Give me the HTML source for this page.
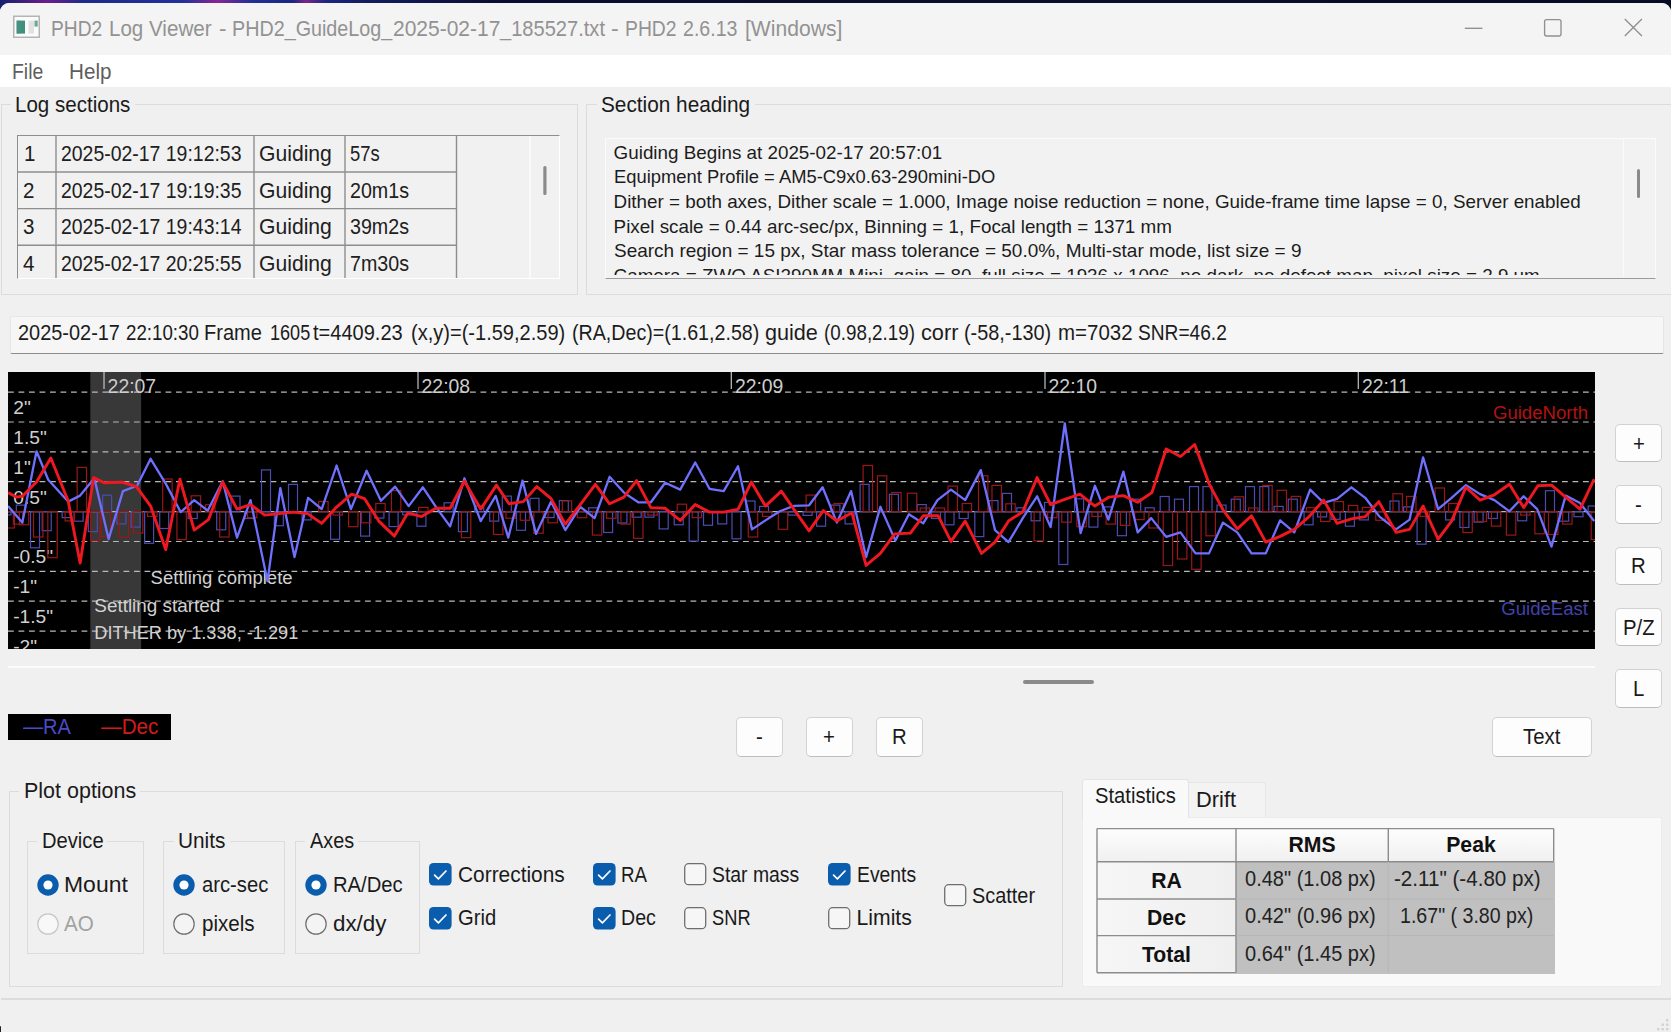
<!DOCTYPE html>
<html lang="en"><head><meta charset="utf-8"><title>PHD2 Log Viewer</title><style>
html,body{margin:0;padding:0}
body{width:1671px;height:1032px;overflow:hidden;background:#0b0b2a;font-family:"Liberation Sans",sans-serif;position:relative}
#wall{position:absolute;left:0;top:0;width:1671px;height:1032px;background:linear-gradient(90deg,#16206e 0,#6a1f8a 2.8%,#1c2a8c 5%,#23309a 11%,#8a2690 13%,#22309a 15%,#1b2680 17.5%,#7a2488 18.3%,#1b2680 19.5%,#141c60 22%,#0b0d30 30%,#090a24 100%)}
#winbg{position:absolute;left:0;top:2.6px;width:1671px;height:1040px;background:#f0f0f0;border-radius:9px 9px 0 0}
#win{position:absolute;left:0;top:0;width:1671px;height:1032px;overflow:hidden}
#win>*,.clip>*{position:absolute}
#win{margin-top:0}
#titlebar{left:0;top:2.6px;width:1671px;height:52.7px;background:#f4f4f4;border-radius:9px 9px 0 0}
#menubar{left:0;top:55.3px;width:1671px;height:31.7px;background:#fff}
.t{white-space:pre;transform-origin:0 50%;display:block}
.clip{overflow:hidden}
svg.a{overflow:visible}
#graph{overflow:hidden}
</style></head><body>
<div id="wall"></div>
<div id="winbg"></div>
<div id="win">
<div id="titlebar"></div>
<div id="menubar"></div>
<svg class="a" style="left:13px;top:15px" width="28" height="24" viewBox="0 0 28 24">
<rect x="0.75" y="1.25" width="25.5" height="21" fill="#fbfbfb" stroke="#b4b4b4" stroke-width="1.5"/>
<rect x="3.6" y="5.6" width="8.4" height="13" fill="#3f9078"/>
<rect x="3.6" y="5.6" width="4" height="13" fill="#4a8f8f" opacity=".6"/>
<rect x="15.5" y="5.6" width="5.5" height="13" fill="#e2e2e2"/>
<rect x="21.5" y="5.6" width="3.2" height="6" fill="#6aa795"/>
</svg>
<span class="t" style="left:50.77px;top:16.60px;font-size:21.2px;line-height:23px;color:#929292;transform:scaleX(0.9048);">PHD2</span>
<span class="t" style="left:108.92px;top:16.60px;font-size:21.2px;line-height:23px;color:#929292;transform:scaleX(0.9684);">Log</span>
<span class="t" style="left:149.32px;top:16.60px;font-size:21.2px;line-height:23px;color:#929292;transform:scaleX(0.9727);">Viewer</span>
<span class="t" style="left:218.76px;top:16.60px;font-size:21.2px;line-height:23px;color:#929292;transform:scaleX(1.0600);">-</span>
<span class="t" style="left:231.95px;top:16.60px;font-size:21.2px;line-height:23px;color:#929292;transform:scaleX(0.9316);">PHD2_GuideLog_</span>
<span class="t" style="left:392.51px;top:16.60px;font-size:21.2px;line-height:23px;color:#929292;transform:scaleX(0.9902);">2025-02-17</span>
<span class="t" style="left:499.64px;top:16.60px;font-size:21.2px;line-height:23px;color:#929292;transform:scaleX(0.9479);">_185527.txt</span>
<span class="t" style="left:611.43px;top:16.60px;font-size:21.2px;line-height:23px;color:#929292;transform:scaleX(1.0953);">-</span>
<span class="t" style="left:625.06px;top:16.60px;font-size:21.2px;line-height:23px;color:#929292;transform:scaleX(0.9120);">PHD2</span>
<span class="t" style="left:683.15px;top:16.60px;font-size:21.2px;line-height:23px;color:#929292;transform:scaleX(0.9245);">2.6.13</span>
<span class="t" style="left:744.90px;top:16.60px;font-size:21.2px;line-height:23px;color:#929292;transform:scaleX(0.9960);">[Windows]</span>
<svg class="a" style="left:1455px;top:10px" width="200" height="36" viewBox="0 0 200 36" fill="none" stroke="#909090" stroke-width="1.35">
<path d="M9.8 18.3H27.4"/>
<rect x="89.6" y="9.6" width="16.4" height="16.4" rx="2"/>
<path d="M169.8 9 L186.9 26.1 M186.9 9 L169.8 26.1"/>
</svg>
<span class="t" style="left:11.96px;top:60.40px;font-size:21.2px;line-height:23px;color:#5e5e5e;transform:scaleX(0.9157);">File</span>
<span class="t" style="left:68.52px;top:60.40px;font-size:21.2px;line-height:23px;color:#5e5e5e;transform:scaleX(0.9739);">Help</span>
<div style="left:1.00px;top:103.50px;width:577.00px;height:191.50px;border:1px solid #dcdcdc;box-sizing:border-box;"></div>
<div style="left:11.00px;top:101.50px;width:124.00px;height:5.00px;background:#f0f0f0;"></div>
<span class="t" style="left:15.02px;top:92.50px;font-size:21.2px;line-height:23px;color:#1a1a1a;transform:scaleX(0.9700);">Log sections</span>
<div style="left:17.00px;top:135.00px;width:543.00px;height:144.00px;box-sizing:border-box;border-top:1.5px solid #8e8e8e;border-left:1.5px solid #8e8e8e;border-right:1.5px solid #fff;border-bottom:1.5px solid #fff;background:#f1f1f1;"></div>
<svg class="a" style="left:17px;top:135px" width="543" height="143" viewBox="0 0 543 143" stroke="#8e8e8e" stroke-width="1.4" fill="none">
<path d="M0 37.0H439.5"/>
<path d="M0 73.6H439.5"/>
<path d="M0 110.2H439.5"/>
<path d="M39.0 0V143"/>
<path d="M237.0 0V143"/>
<path d="M328.0 0V143"/>
<path d="M439.5 0V143"/>
<path d="M513 1V143" stroke="#fbfbfb" stroke-width="1.5"/>
<rect x="526.3" y="31" width="3.2" height="29" rx="1.5" fill="#8a8a8a" stroke="none"/>
</svg>
<div class="clip" style="left:17px;top:135px;width:541px;height:142.5px">
<span class="t" style="left:6.82px;top:7.00px;font-size:21.2px;line-height:23px;color:#202020;transform:scaleX(0.9700);">1</span>
<span class="t" style="left:43.56px;top:7.00px;font-size:21.2px;line-height:23px;color:#202020;transform:scaleX(0.9173);">2025-02-17 19:12:53</span>
<span class="t" style="left:242.30px;top:7.00px;font-size:21.2px;line-height:23px;color:#202020;transform:scaleX(0.9976);">Guiding</span>
<span class="t" style="left:333.39px;top:7.00px;font-size:21.2px;line-height:23px;color:#202020;transform:scaleX(0.8694);">57s</span>
<span class="t" style="left:5.92px;top:43.60px;font-size:21.2px;line-height:23px;color:#202020;transform:scaleX(0.9700);">2</span>
<span class="t" style="left:43.56px;top:43.60px;font-size:21.2px;line-height:23px;color:#202020;transform:scaleX(0.9173);">2025-02-17 19:19:35</span>
<span class="t" style="left:242.30px;top:43.60px;font-size:21.2px;line-height:23px;color:#202020;transform:scaleX(0.9976);">Guiding</span>
<span class="t" style="left:333.35px;top:43.60px;font-size:21.2px;line-height:23px;color:#202020;transform:scaleX(0.9280);">20m1s</span>
<span class="t" style="left:5.92px;top:80.20px;font-size:21.2px;line-height:23px;color:#202020;transform:scaleX(0.9700);">3</span>
<span class="t" style="left:43.56px;top:80.20px;font-size:21.2px;line-height:23px;color:#202020;transform:scaleX(0.9173);">2025-02-17 19:43:14</span>
<span class="t" style="left:242.30px;top:80.20px;font-size:21.2px;line-height:23px;color:#202020;transform:scaleX(0.9976);">Guiding</span>
<span class="t" style="left:333.35px;top:80.20px;font-size:21.2px;line-height:23px;color:#202020;transform:scaleX(0.9280);">39m2s</span>
<span class="t" style="left:5.92px;top:116.80px;font-size:21.2px;line-height:23px;color:#202020;transform:scaleX(0.9700);">4</span>
<span class="t" style="left:43.56px;top:116.80px;font-size:21.2px;line-height:23px;color:#202020;transform:scaleX(0.9173);">2025-02-17 20:25:55</span>
<span class="t" style="left:242.30px;top:116.80px;font-size:21.2px;line-height:23px;color:#202020;transform:scaleX(0.9976);">Guiding</span>
<span class="t" style="left:333.35px;top:116.80px;font-size:21.2px;line-height:23px;color:#202020;transform:scaleX(0.9280);">7m30s</span>
</div>
<div style="left:586.00px;top:103.50px;width:1094.00px;height:191.50px;border:1px solid #dcdcdc;box-sizing:border-box;"></div>
<div style="left:597.00px;top:101.50px;width:158.00px;height:5.00px;background:#f0f0f0;"></div>
<span class="t" style="left:601.01px;top:92.50px;font-size:21.2px;line-height:23px;color:#1a1a1a;transform:scaleX(0.9810);">Section heading</span>
<div style="left:605.00px;top:137.50px;width:1050.50px;height:141.00px;box-sizing:border-box;background:#f2f2f2;border:1.5px solid #fbfbfb;border-bottom:1.5px solid #9a9a9a;"></div>
<div style="left:1622.50px;top:139.00px;width:1.50px;height:138.00px;background:#fafafa;"></div>
<div style="left:1637.30px;top:169.00px;width:3.20px;height:28.50px;background:#8a8a8a;border-radius:1.5px;"></div>
<div class="clip" style="left:606px;top:139px;width:1016px;height:136px">
<span class="t" style="left:7.60px;top:2.90px;font-size:18.84px;line-height:21px;color:#1c1c1c;">Guiding Begins at 2025-02-17 20:57:01</span>
<span class="t" style="left:7.62px;top:27.45px;font-size:18.84px;line-height:21px;color:#1c1c1c;transform:scaleX(0.9756);">Equipment Profile = AM5-C9x0.63-290mini-DO</span>
<span class="t" style="left:7.60px;top:52.00px;font-size:18.84px;line-height:21px;color:#1c1c1c;">Dither = both axes, Dither scale = 1.000, Image noise reduction = none, Guide-frame time lapse = 0, Server enabled</span>
<span class="t" style="left:7.60px;top:76.55px;font-size:18.84px;line-height:21px;color:#1c1c1c;">Pixel scale = 0.44 arc-sec/px, Binning = 1, Focal length = 1371 mm</span>
<span class="t" style="left:7.59px;top:101.10px;font-size:18.84px;line-height:21px;color:#1c1c1c;transform:scaleX(1.0083);">Search region = 15 px, Star mass tolerance = 50.0%, Multi-star mode, list size = 9</span>
<span class="t" style="left:7.60px;top:125.65px;font-size:18.84px;line-height:21px;color:#1c1c1c;">Camera = ZWO ASI290MM Mini, gain = 80, full size = 1936 x 1096, no dark, no defect map, pixel size = 2.9 um</span>
</div>
<div style="left:10.00px;top:316.00px;width:1653.50px;height:37.50px;box-sizing:border-box;background:#f6f6f6;border:1px solid #e6e6e6;border-bottom:1.5px solid #8c8c8c;border-radius:2px;"></div>
<span class="t" style="left:18.14px;top:321.00px;font-size:21.2px;line-height:23px;color:#1c1c1c;transform:scaleX(0.9407);">2025-02-17</span>
<span class="t" style="left:125.68px;top:321.00px;font-size:21.2px;line-height:23px;color:#1c1c1c;transform:scaleX(0.8838);">22:10:30</span>
<span class="t" style="left:203.94px;top:321.00px;font-size:21.2px;line-height:23px;color:#1c1c1c;transform:scaleX(0.9456);">Frame</span>
<span class="t" style="left:269.60px;top:321.00px;font-size:21.2px;line-height:23px;color:#1c1c1c;transform:scaleX(0.8522);">1605</span>
<span class="t" style="left:313.14px;top:321.00px;font-size:21.2px;line-height:23px;color:#1c1c1c;transform:scaleX(0.9454);">t=4409.23</span>
<span class="t" style="left:411.34px;top:321.00px;font-size:21.2px;line-height:23px;color:#1c1c1c;transform:scaleX(0.9457);">(x,y)=(-1.59,2.59)</span>
<span class="t" style="left:571.95px;top:321.00px;font-size:21.2px;line-height:23px;color:#1c1c1c;transform:scaleX(0.9274);">(RA,Dec)=(1.61,2.58)</span>
<span class="t" style="left:765.09px;top:321.00px;font-size:21.2px;line-height:23px;color:#1c1c1c;transform:scaleX(1.0203);">guide</span>
<span class="t" style="left:824.18px;top:321.00px;font-size:21.2px;line-height:23px;color:#1c1c1c;transform:scaleX(0.8879);">(0.98,2.19)</span>
<span class="t" style="left:921.28px;top:321.00px;font-size:21.2px;line-height:23px;color:#1c1c1c;transform:scaleX(1.0253);">corr</span>
<span class="t" style="left:964.14px;top:321.00px;font-size:21.2px;line-height:23px;color:#1c1c1c;transform:scaleX(0.9369);">(-58,-130)</span>
<span class="t" style="left:1057.52px;top:321.00px;font-size:21.2px;line-height:23px;color:#1c1c1c;transform:scaleX(0.9670);">m=7032</span>
<span class="t" style="left:1138.37px;top:321.00px;font-size:21.2px;line-height:23px;color:#1c1c1c;transform:scaleX(0.9031);">SNR=46.2</span>
<svg class="a" id="graph" style="left:8px;top:371.5px" width="1587" height="277.1" viewBox="8 371.5 1587 277.1" font-family="Liberation Sans, sans-serif">
<rect x="8" y="371.5" width="1587" height="277.1" fill="#000"/>
<rect x="90.3" y="371.5" width="50.8" height="277.1" fill="#383838"/>
<path d="M8 391.6H1595" stroke="#b8b8b8" stroke-width="1.15" stroke-dasharray="5.8 4.7"/>
<path d="M8 421.5H1595" stroke="#b8b8b8" stroke-width="1.15" stroke-dasharray="5.8 4.7"/>
<path d="M8 451.4H1595" stroke="#b8b8b8" stroke-width="1.15" stroke-dasharray="5.8 4.7"/>
<path d="M8 481.2H1595" stroke="#b8b8b8" stroke-width="1.15" stroke-dasharray="5.8 4.7"/>
<path d="M8 511.1H1595" stroke="#bcbcbc" stroke-width="1.4"/>
<path d="M8 541.0H1595" stroke="#b8b8b8" stroke-width="1.15" stroke-dasharray="5.8 4.7"/>
<path d="M8 570.9H1595" stroke="#b8b8b8" stroke-width="1.15" stroke-dasharray="5.8 4.7"/>
<path d="M8 600.7H1595" stroke="#b8b8b8" stroke-width="1.15" stroke-dasharray="5.8 4.7"/>
<path d="M8 630.6H1595" stroke="#b8b8b8" stroke-width="1.15" stroke-dasharray="5.8 4.7"/>
<path d="M104 371.5V388.5" stroke="#c4c4c4" stroke-width="1.2"/>
<text x="107.6" y="392.4" font-size="19.4" fill="#cecece">22:07</text>
<path d="M418 371.5V388.5" stroke="#c4c4c4" stroke-width="1.2"/>
<text x="421.6" y="392.4" font-size="19.4" fill="#cecece">22:08</text>
<path d="M731.3 371.5V388.5" stroke="#c4c4c4" stroke-width="1.2"/>
<text x="734.9" y="392.4" font-size="19.4" fill="#cecece">22:09</text>
<path d="M1045 371.5V388.5" stroke="#c4c4c4" stroke-width="1.2"/>
<text x="1048.6" y="392.4" font-size="19.4" fill="#cecece">22:10</text>
<path d="M1358.3 371.5V388.5" stroke="#c4c4c4" stroke-width="1.2"/>
<text x="1361.9" y="392.4" font-size="19.4" fill="#cecece">22:11</text>
<text x="13.2" y="413.5" font-size="19.2" fill="#d0d0d0">2"</text>
<text x="13.2" y="443.4" font-size="19.2" fill="#d0d0d0">1.5"</text>
<text x="13.2" y="473.2" font-size="19.2" fill="#d0d0d0">1"</text>
<text x="13.2" y="503.1" font-size="19.2" fill="#d0d0d0">0.5"</text>
<text x="13.2" y="562.9" font-size="19.2" fill="#d0d0d0">-0.5"</text>
<text x="13.2" y="592.8" font-size="19.2" fill="#d0d0d0">-1"</text>
<text x="13.2" y="622.6" font-size="19.2" fill="#d0d0d0">-1.5"</text>
<text x="13.2" y="652.5" font-size="19.2" fill="#d0d0d0">-2"</text>
<text x="150.6" y="583.1" font-size="18.7" fill="#d2d2d2" textLength="142" lengthAdjust="spacingAndGlyphs">Settling complete</text>
<text x="94.3" y="611.1" font-size="18.7" fill="#d2d2d2" textLength="126" lengthAdjust="spacingAndGlyphs">Settling started</text>
<text x="94.3" y="639" font-size="18.7" fill="#d2d2d2" textLength="204" lengthAdjust="spacingAndGlyphs">DITHER by 1.338, -1.291</text>
<text x="1588" y="418.6" font-size="18.6" fill="#b41212" text-anchor="end">GuideNorth</text>
<text x="1588" y="614.8" font-size="18.6" fill="#4242aa" text-anchor="end">GuideEast</text>
<g fill="none" stroke-width="1.2">
<rect x="2.0" y="511.1" width="9" height="3.3" stroke="#4c4cb0"/>
<rect x="16.3" y="504.6" width="9" height="6.6" stroke="#4c4cb0"/>
<rect x="30.5" y="511.1" width="9" height="36.2" stroke="#4c4cb0"/>
<rect x="42.2" y="511.1" width="9" height="19.1" stroke="#4c4cb0"/>
<rect x="62.1" y="511.1" width="9" height="6.0" stroke="#4c4cb0"/>
<rect x="74.1" y="511.1" width="9" height="9.6" stroke="#4c4cb0"/>
<rect x="88.3" y="511.1" width="9" height="20.0" stroke="#4c4cb0"/>
<rect x="102.6" y="494.7" width="9" height="16.5" stroke="#4c4cb0"/>
<rect x="116.9" y="511.1" width="9" height="12.3" stroke="#4c4cb0"/>
<rect x="131.1" y="511.1" width="9" height="15.5" stroke="#4c4cb0"/>
<rect x="144.6" y="511.1" width="9" height="31.7" stroke="#4c4cb0"/>
<rect x="159.7" y="511.1" width="9" height="16.9" stroke="#4c4cb0"/>
<rect x="188.2" y="511.1" width="9" height="6.9" stroke="#4c4cb0"/>
<rect x="216.7" y="511.1" width="9" height="18.2" stroke="#4c4cb0"/>
<rect x="231.0" y="495.6" width="9" height="15.6" stroke="#4c4cb0"/>
<rect x="244.5" y="511.1" width="9" height="6.9" stroke="#4c4cb0"/>
<rect x="261.5" y="469.4" width="9" height="41.7" stroke="#4c4cb0"/>
<rect x="274.3" y="511.1" width="9" height="14.1" stroke="#4c4cb0"/>
<rect x="288.5" y="483.9" width="9" height="27.3" stroke="#4c4cb0"/>
<rect x="302.1" y="511.1" width="9" height="8.3" stroke="#4c4cb0"/>
<rect x="330.6" y="511.1" width="9" height="27.7" stroke="#4c4cb0"/>
<rect x="360.6" y="511.1" width="9" height="24.5" stroke="#4c4cb0"/>
<rect x="374.9" y="511.1" width="9" height="6.5" stroke="#4c4cb0"/>
<rect x="389.1" y="511.1" width="9" height="15.0" stroke="#4c4cb0"/>
<rect x="402.7" y="511.1" width="9" height="3.3" stroke="#4c4cb0"/>
<rect x="416.9" y="511.1" width="9" height="14.6" stroke="#4c4cb0"/>
<rect x="444.1" y="502.3" width="9" height="8.8" stroke="#4c4cb0"/>
<rect x="458.4" y="511.1" width="9" height="20.0" stroke="#4c4cb0"/>
<rect x="474.7" y="505.5" width="9" height="5.7" stroke="#4c4cb0"/>
<rect x="489.7" y="511.1" width="9" height="9.5" stroke="#4c4cb0"/>
<rect x="502.3" y="495.6" width="9" height="15.6" stroke="#4c4cb0"/>
<rect x="516.5" y="511.1" width="9" height="18.7" stroke="#4c4cb0"/>
<rect x="530.0" y="497.8" width="9" height="13.3" stroke="#4c4cb0"/>
<rect x="545.1" y="511.1" width="9" height="6.0" stroke="#4c4cb0"/>
<rect x="559.3" y="500.1" width="9" height="11.1" stroke="#4c4cb0"/>
<rect x="588.6" y="507.3" width="9" height="3.9" stroke="#4c4cb0"/>
<rect x="603.6" y="511.1" width="9" height="20.9" stroke="#4c4cb0"/>
<rect x="617.9" y="511.1" width="9" height="11.4" stroke="#4c4cb0"/>
<rect x="632.2" y="511.1" width="9" height="5.6" stroke="#4c4cb0"/>
<rect x="644.9" y="511.1" width="9" height="5.6" stroke="#4c4cb0"/>
<rect x="659.2" y="511.1" width="9" height="17.3" stroke="#4c4cb0"/>
<rect x="674.2" y="511.1" width="9" height="13.2" stroke="#4c4cb0"/>
<rect x="689.2" y="511.1" width="9" height="29.5" stroke="#4c4cb0"/>
<rect x="703.5" y="511.1" width="9" height="13.7" stroke="#4c4cb0"/>
<rect x="717.7" y="511.1" width="9" height="12.3" stroke="#4c4cb0"/>
<rect x="732.0" y="511.1" width="9" height="27.2" stroke="#4c4cb0"/>
<rect x="746.0" y="500.5" width="9" height="10.6" stroke="#4c4cb0"/>
<rect x="759.5" y="505.9" width="9" height="5.2" stroke="#4c4cb0"/>
<rect x="788.1" y="511.1" width="9" height="3.5" stroke="#4c4cb0"/>
<rect x="803.1" y="511.1" width="9" height="3.8" stroke="#4c4cb0"/>
<rect x="816.6" y="511.1" width="9" height="14.6" stroke="#4c4cb0"/>
<rect x="830.9" y="504.6" width="9" height="6.6" stroke="#4c4cb0"/>
<rect x="845.1" y="511.1" width="9" height="12.3" stroke="#4c4cb0"/>
<rect x="860.1" y="483.9" width="9" height="27.3" stroke="#4c4cb0"/>
<rect x="889.4" y="493.8" width="9" height="17.4" stroke="#4c4cb0"/>
<rect x="917.2" y="504.1" width="9" height="7.0" stroke="#4c4cb0"/>
<rect x="931.5" y="511.1" width="9" height="6.9" stroke="#4c4cb0"/>
<rect x="945.0" y="511.1" width="9" height="13.2" stroke="#4c4cb0"/>
<rect x="959.2" y="511.1" width="9" height="6.9" stroke="#4c4cb0"/>
<rect x="974.8" y="511.1" width="9" height="25.0" stroke="#4c4cb0"/>
<rect x="989.0" y="500.1" width="9" height="11.1" stroke="#4c4cb0"/>
<rect x="1002.5" y="492.9" width="9" height="18.3" stroke="#4c4cb0"/>
<rect x="1016.8" y="507.3" width="9" height="3.9" stroke="#4c4cb0"/>
<rect x="1031.1" y="511.1" width="9" height="9.2" stroke="#4c4cb0"/>
<rect x="1044.6" y="501.9" width="9" height="9.3" stroke="#4c4cb0"/>
<rect x="1058.8" y="511.1" width="9" height="52.9" stroke="#4c4cb0"/>
<rect x="1074.6" y="498.3" width="9" height="12.9" stroke="#4c4cb0"/>
<rect x="1088.9" y="511.1" width="9" height="15.5" stroke="#4c4cb0"/>
<rect x="1102.4" y="506.4" width="9" height="4.8" stroke="#4c4cb0"/>
<rect x="1117.4" y="511.1" width="9" height="24.1" stroke="#4c4cb0"/>
<rect x="1131.7" y="498.7" width="9" height="12.4" stroke="#4c4cb0"/>
<rect x="1145.2" y="507.3" width="9" height="3.9" stroke="#4c4cb0"/>
<rect x="1160.2" y="496.0" width="9" height="15.1" stroke="#4c4cb0"/>
<rect x="1174.5" y="498.7" width="9" height="12.4" stroke="#4c4cb0"/>
<rect x="1189.5" y="486.1" width="9" height="25.0" stroke="#4c4cb0"/>
<rect x="1203.0" y="486.1" width="9" height="25.0" stroke="#4c4cb0"/>
<rect x="1217.0" y="504.6" width="9" height="6.6" stroke="#4c4cb0"/>
<rect x="1231.3" y="498.7" width="9" height="12.4" stroke="#4c4cb0"/>
<rect x="1245.5" y="486.1" width="9" height="25.0" stroke="#4c4cb0"/>
<rect x="1259.8" y="486.1" width="9" height="25.0" stroke="#4c4cb0"/>
<rect x="1274.1" y="505.9" width="9" height="5.2" stroke="#4c4cb0"/>
<rect x="1288.3" y="498.7" width="9" height="12.4" stroke="#4c4cb0"/>
<rect x="1304.1" y="511.1" width="9" height="13.2" stroke="#4c4cb0"/>
<rect x="1317.6" y="511.1" width="9" height="5.3" stroke="#4c4cb0"/>
<rect x="1331.1" y="511.1" width="9" height="7.7" stroke="#4c4cb0"/>
<rect x="1345.4" y="511.1" width="9" height="14.6" stroke="#4c4cb0"/>
<rect x="1359.3" y="511.1" width="9" height="8.3" stroke="#4c4cb0"/>
<rect x="1390.0" y="500.5" width="9" height="10.6" stroke="#4c4cb0"/>
<rect x="1403.6" y="506.4" width="9" height="4.8" stroke="#4c4cb0"/>
<rect x="1417.1" y="511.1" width="9" height="32.6" stroke="#4c4cb0"/>
<rect x="1445.6" y="511.1" width="9" height="8.3" stroke="#4c4cb0"/>
<rect x="1459.9" y="511.1" width="9" height="15.9" stroke="#4c4cb0"/>
<rect x="1474.1" y="511.1" width="9" height="10.5" stroke="#4c4cb0"/>
<rect x="1488.4" y="511.1" width="9" height="6.9" stroke="#4c4cb0"/>
<rect x="1517.7" y="511.1" width="9" height="9.2" stroke="#4c4cb0"/>
<rect x="1545.5" y="490.2" width="9" height="21.0" stroke="#4c4cb0"/>
<rect x="1559.7" y="511.1" width="9" height="9.6" stroke="#4c4cb0"/>
<rect x="1574.0" y="511.1" width="9" height="5.1" stroke="#4c4cb0"/>
<rect x="1588.2" y="505.5" width="9" height="5.7" stroke="#4c4cb0"/>
<rect x="5.0" y="511.1" width="9.4" height="16.4" stroke="#981818"/>
<rect x="13.3" y="511.1" width="9.4" height="12.5" stroke="#981818"/>
<rect x="19.3" y="511.1" width="9.4" height="13.2" stroke="#981818"/>
<rect x="33.5" y="511.1" width="9.4" height="25.4" stroke="#981818"/>
<rect x="47.8" y="511.1" width="9.4" height="46.1" stroke="#981818"/>
<rect x="65.1" y="511.1" width="9.4" height="9.3" stroke="#981818"/>
<rect x="77.1" y="466.9" width="9.4" height="44.3" stroke="#981818"/>
<rect x="90.6" y="511.1" width="9.4" height="29.3" stroke="#981818"/>
<rect x="101.1" y="511.1" width="9.4" height="24.8" stroke="#981818"/>
<rect x="119.1" y="511.1" width="9.4" height="25.4" stroke="#981818"/>
<rect x="133.4" y="511.1" width="9.4" height="21.6" stroke="#981818"/>
<rect x="147.6" y="511.1" width="9.4" height="4.8" stroke="#981818"/>
<rect x="162.7" y="478.5" width="9.4" height="32.7" stroke="#981818"/>
<rect x="176.9" y="511.1" width="9.4" height="28.0" stroke="#981818"/>
<rect x="191.2" y="495.3" width="9.4" height="15.9" stroke="#981818"/>
<rect x="205.5" y="504.3" width="9.4" height="6.8" stroke="#981818"/>
<rect x="219.7" y="511.1" width="9.4" height="25.4" stroke="#981818"/>
<rect x="247.5" y="511.1" width="9.4" height="6.1" stroke="#981818"/>
<rect x="318.7" y="501.1" width="9.4" height="10.1" stroke="#981818"/>
<rect x="333.0" y="511.1" width="9.4" height="3.5" stroke="#981818"/>
<rect x="348.6" y="511.1" width="9.4" height="15.1" stroke="#981818"/>
<rect x="361.5" y="511.1" width="9.4" height="11.2" stroke="#981818"/>
<rect x="375.8" y="503.0" width="9.4" height="8.1" stroke="#981818"/>
<rect x="391.4" y="490.1" width="9.4" height="21.0" stroke="#981818"/>
<rect x="418.6" y="506.9" width="9.4" height="4.3" stroke="#981818"/>
<rect x="461.4" y="511.1" width="9.4" height="26.1" stroke="#981818"/>
<rect x="493.5" y="511.1" width="9.4" height="22.9" stroke="#981818"/>
<rect x="506.0" y="511.1" width="9.4" height="6.7" stroke="#981818"/>
<rect x="520.3" y="511.1" width="9.4" height="8.7" stroke="#981818"/>
<rect x="533.8" y="511.1" width="9.4" height="21.6" stroke="#981818"/>
<rect x="548.1" y="511.1" width="9.4" height="11.2" stroke="#981818"/>
<rect x="562.3" y="500.4" width="9.4" height="10.7" stroke="#981818"/>
<rect x="577.3" y="511.1" width="9.4" height="6.1" stroke="#981818"/>
<rect x="592.4" y="511.1" width="9.4" height="23.5" stroke="#981818"/>
<rect x="606.6" y="511.1" width="9.4" height="6.7" stroke="#981818"/>
<rect x="620.9" y="511.1" width="9.4" height="12.5" stroke="#981818"/>
<rect x="633.6" y="511.1" width="9.4" height="26.7" stroke="#981818"/>
<rect x="647.9" y="511.1" width="9.4" height="3.5" stroke="#981818"/>
<rect x="677.2" y="503.7" width="9.4" height="7.5" stroke="#981818"/>
<rect x="692.2" y="511.1" width="9.4" height="6.1" stroke="#981818"/>
<rect x="748.3" y="511.1" width="9.4" height="25.4" stroke="#981818"/>
<rect x="762.5" y="511.1" width="9.4" height="4.8" stroke="#981818"/>
<rect x="778.3" y="511.1" width="9.4" height="17.7" stroke="#981818"/>
<rect x="806.1" y="494.6" width="9.4" height="16.5" stroke="#981818"/>
<rect x="833.9" y="503.0" width="9.4" height="8.1" stroke="#981818"/>
<rect x="863.1" y="464.9" width="9.4" height="46.2" stroke="#981818"/>
<rect x="877.4" y="475.3" width="9.4" height="35.9" stroke="#981818"/>
<rect x="891.7" y="492.0" width="9.4" height="19.1" stroke="#981818"/>
<rect x="907.4" y="492.7" width="9.4" height="18.5" stroke="#981818"/>
<rect x="920.2" y="507.5" width="9.4" height="3.6" stroke="#981818"/>
<rect x="935.2" y="507.5" width="9.4" height="3.6" stroke="#981818"/>
<rect x="948.0" y="485.6" width="9.4" height="25.6" stroke="#981818"/>
<rect x="962.2" y="503.0" width="9.4" height="8.1" stroke="#981818"/>
<rect x="978.5" y="475.3" width="9.4" height="35.9" stroke="#981818"/>
<rect x="992.0" y="484.9" width="9.4" height="26.2" stroke="#981818"/>
<rect x="1005.8" y="503.3" width="9.4" height="7.9" stroke="#981818"/>
<rect x="1034.1" y="511.1" width="9.4" height="29.3" stroke="#981818"/>
<rect x="1047.6" y="511.1" width="9.4" height="6.1" stroke="#981818"/>
<rect x="1061.8" y="511.1" width="9.4" height="10.6" stroke="#981818"/>
<rect x="1076.9" y="511.1" width="9.4" height="15.1" stroke="#981818"/>
<rect x="1091.9" y="511.1" width="9.4" height="4.8" stroke="#981818"/>
<rect x="1106.1" y="511.1" width="9.4" height="12.5" stroke="#981818"/>
<rect x="1120.4" y="511.1" width="9.4" height="13.8" stroke="#981818"/>
<rect x="1134.7" y="511.1" width="9.4" height="8.0" stroke="#981818"/>
<rect x="1148.9" y="511.1" width="9.4" height="16.4" stroke="#981818"/>
<rect x="1163.2" y="511.1" width="9.4" height="53.9" stroke="#981818"/>
<rect x="1177.5" y="511.1" width="9.4" height="47.4" stroke="#981818"/>
<rect x="1191.7" y="511.1" width="9.4" height="57.7" stroke="#981818"/>
<rect x="1206.0" y="511.1" width="9.4" height="24.2" stroke="#981818"/>
<rect x="1234.3" y="496.3" width="9.4" height="14.8" stroke="#981818"/>
<rect x="1248.5" y="507.5" width="9.4" height="3.6" stroke="#981818"/>
<rect x="1262.8" y="484.9" width="9.4" height="26.2" stroke="#981818"/>
<rect x="1277.1" y="489.8" width="9.4" height="21.3" stroke="#981818"/>
<rect x="1291.3" y="495.9" width="9.4" height="15.2" stroke="#981818"/>
<rect x="1306.4" y="507.2" width="9.4" height="4.0" stroke="#981818"/>
<rect x="1320.6" y="511.1" width="9.4" height="9.9" stroke="#981818"/>
<rect x="1334.1" y="501.1" width="9.4" height="10.1" stroke="#981818"/>
<rect x="1348.4" y="505.0" width="9.4" height="6.2" stroke="#981818"/>
<rect x="1362.3" y="506.9" width="9.4" height="4.3" stroke="#981818"/>
<rect x="1375.8" y="511.1" width="9.4" height="8.7" stroke="#981818"/>
<rect x="1393.0" y="493.3" width="9.4" height="17.8" stroke="#981818"/>
<rect x="1406.6" y="495.9" width="9.4" height="15.2" stroke="#981818"/>
<rect x="1420.1" y="511.1" width="9.4" height="4.8" stroke="#981818"/>
<rect x="1435.1" y="487.5" width="9.4" height="23.6" stroke="#981818"/>
<rect x="1448.6" y="503.0" width="9.4" height="8.1" stroke="#981818"/>
<rect x="1462.9" y="511.1" width="9.4" height="20.9" stroke="#981818"/>
<rect x="1477.1" y="511.1" width="9.4" height="9.9" stroke="#981818"/>
<rect x="1491.4" y="511.1" width="9.4" height="14.5" stroke="#981818"/>
<rect x="1506.4" y="511.1" width="9.4" height="23.5" stroke="#981818"/>
<rect x="1520.7" y="511.1" width="9.4" height="3.5" stroke="#981818"/>
<rect x="1534.9" y="511.1" width="9.4" height="22.2" stroke="#981818"/>
<rect x="1548.5" y="511.1" width="9.4" height="22.9" stroke="#981818"/>
<rect x="1562.7" y="511.1" width="9.4" height="12.5" stroke="#981818"/>
<rect x="1591.2" y="511.1" width="9.4" height="28.0" stroke="#981818"/>
</g>
<polyline fill="none" stroke="#7070ff" stroke-width="2.3" stroke-linejoin="round" points="8.0,505.6 22.3,522.1 36.5,450.8 48.2,479.3 68.1,501.1 80.1,495.1 94.3,477.8 108.6,538.6 122.9,490.6 137.1,485.3 150.6,458.3 165.7,483.1 180.7,511.6 194.2,499.6 207.7,510.1 222.7,480.8 237.0,537.1 250.5,499.6 267.5,580.7 280.3,487.6 294.5,556.6 308.1,497.3 321.7,508.6 336.6,465.0 350.9,508.6 366.6,470.3 380.9,500.3 395.1,486.1 408.7,505.6 422.9,486.8 436.4,507.1 450.1,525.9 464.4,477.8 480.7,520.6 495.7,495.4 508.3,537.1 522.5,480.1 536.0,533.4 551.1,501.1 565.3,529.6 580.3,506.3 594.6,517.6 609.6,476.3 623.9,492.1 638.2,501.8 650.9,501.8 665.2,482.3 680.2,489.1 695.2,462.0 709.5,488.3 723.7,490.6 738.0,465.8 752.0,528.9 765.5,519.9 779.8,510.8 794.1,505.3 809.1,504.8 822.6,486.8 836.9,522.1 851.1,490.6 866.1,556.6 880.4,506.3 895.4,540.1 908.9,513.8 923.2,522.9 937.5,499.6 951.0,489.1 965.2,499.6 980.8,469.6 995.0,529.6 1008.5,541.6 1022.8,517.6 1037.1,495.8 1050.6,526.6 1064.8,423.0 1080.6,532.6 1094.9,485.3 1108.4,519.1 1123.4,471.1 1137.7,531.9 1151.2,517.6 1166.2,536.4 1180.5,531.9 1195.5,552.9 1209.0,552.9 1223.0,522.1 1237.3,531.9 1251.5,552.9 1265.8,552.9 1280.1,519.9 1294.3,531.9 1310.1,489.1 1323.6,502.3 1337.1,498.4 1351.4,486.8 1365.3,497.3 1379.5,516.1 1396.0,528.9 1409.6,519.1 1423.1,456.8 1438.1,508.6 1451.6,497.3 1465.9,484.6 1480.1,493.6 1494.4,499.6 1509.4,510.8 1523.7,495.8 1537.2,508.6 1551.5,546.1 1565.7,495.1 1580.0,502.6 1594.2,520.6"/>
<polyline fill="none" stroke="#f01820" stroke-width="2.9" stroke-linejoin="round" points="8.0,492.1 16.3,496.6 22.3,495.8 36.5,481.6 50.8,457.5 68.1,500.3 80.1,562.6 93.6,477.1 104.1,482.3 122.1,481.6 136.4,486.1 150.6,505.6 165.7,549.1 179.9,478.6 194.2,529.6 208.5,519.1 222.7,481.6 237.0,508.6 250.5,504.1 264.7,514.6 278.9,513.1 293.2,511.6 307.5,513.1 321.7,522.9 336.0,507.1 351.6,493.6 364.5,498.1 378.8,520.6 394.4,535.6 407.9,512.3 421.6,516.1 435.8,507.8 450.1,507.8 464.4,480.8 480.7,508.6 496.5,484.6 509.0,503.3 523.3,501.1 536.8,486.1 551.1,498.1 565.3,523.6 580.3,504.1 595.4,483.8 609.6,503.3 623.9,496.6 636.6,480.1 650.9,507.1 665.2,507.8 680.2,519.9 695.2,504.1 709.5,511.6 723.7,511.6 738.0,508.9 751.3,481.6 765.5,505.6 781.3,490.6 794.8,510.1 809.1,530.4 823.3,510.1 836.9,520.6 851.9,512.3 866.1,564.9 880.4,552.9 894.7,533.4 910.4,532.6 923.2,515.3 938.2,515.3 951.0,540.9 965.2,520.6 981.5,552.9 995.0,541.6 1008.8,520.3 1022.8,511.3 1037.1,477.1 1050.6,504.1 1064.8,498.8 1079.9,493.6 1094.9,505.6 1109.1,496.6 1123.4,495.1 1137.7,501.8 1151.9,492.1 1166.2,448.5 1180.5,456.0 1194.7,444.0 1209.0,483.1 1223.0,509.3 1237.3,528.4 1251.5,515.3 1265.8,541.6 1280.1,535.9 1294.3,528.9 1309.4,515.8 1323.6,499.6 1337.1,522.9 1351.4,518.4 1365.3,516.1 1378.8,501.1 1396.0,531.9 1409.6,528.9 1423.1,505.6 1438.1,538.6 1451.6,520.6 1465.9,486.8 1480.1,499.6 1494.4,494.3 1509.4,483.8 1523.7,507.1 1537.9,485.3 1551.5,484.6 1565.7,496.6 1580.0,508.6 1594.2,478.6"/>
</svg>
<div style="left:1615.00px;top:424.00px;width:47.30px;height:38.40px;box-sizing:border-box;background:#fdfdfd;border:1px solid #d2d2d2;border-bottom-color:#bdbdbd;border-radius:5px;"></div>
<span class="t" style="left:1632.71px;top:431.50px;font-size:21.2px;line-height:23px;color:#1a1a1a;transform:scaleX(0.9600);">+</span>
<div style="left:1615.00px;top:485.30px;width:47.30px;height:38.40px;box-sizing:border-box;background:#fdfdfd;border:1px solid #d2d2d2;border-bottom-color:#bdbdbd;border-radius:5px;"></div>
<span class="t" style="left:1635.26px;top:492.80px;font-size:21.2px;line-height:23px;color:#1a1a1a;transform:scaleX(0.9600);">-</span>
<div style="left:1615.00px;top:546.80px;width:47.30px;height:38.40px;box-sizing:border-box;background:#fdfdfd;border:1px solid #d2d2d2;border-bottom-color:#bdbdbd;border-radius:5px;"></div>
<span class="t" style="left:1631.30px;top:554.30px;font-size:21.2px;line-height:23px;color:#1a1a1a;transform:scaleX(0.9600);">R</span>
<div style="left:1615.00px;top:608.00px;width:47.30px;height:38.40px;box-sizing:border-box;background:#fdfdfd;border:1px solid #d2d2d2;border-bottom-color:#bdbdbd;border-radius:5px;"></div>
<span class="t" style="left:1622.82px;top:615.50px;font-size:21.2px;line-height:23px;color:#1a1a1a;transform:scaleX(0.9600);">P/Z</span>
<div style="left:1615.00px;top:669.20px;width:47.30px;height:38.40px;box-sizing:border-box;background:#fdfdfd;border:1px solid #d2d2d2;border-bottom-color:#bdbdbd;border-radius:5px;"></div>
<span class="t" style="left:1632.99px;top:676.70px;font-size:21.2px;line-height:23px;color:#1a1a1a;transform:scaleX(0.9600);">L</span>
<div style="left:8.00px;top:666.30px;width:1587.00px;height:1.50px;background:#fcfcfc;"></div>
<div style="left:1022.50px;top:680.20px;width:71.70px;height:3.40px;background:#8a8a8a;border-radius:2px;"></div>
<div style="left:8.00px;top:714.00px;width:163.00px;height:26.00px;background:#000;"></div>
<span class="t" style="left:23.24px;top:715.30px;font-size:21.2px;line-height:23px;color:#4a4ac6;transform:scaleX(0.9482);">—RA</span>
<span class="t" style="left:100.52px;top:715.30px;font-size:21.2px;line-height:23px;color:#d41a1a;transform:scaleX(0.9756);">—Dec</span>
<div style="left:735.50px;top:716.60px;width:47.20px;height:40.00px;box-sizing:border-box;background:#fdfdfd;border:1px solid #d2d2d2;border-bottom-color:#bdbdbd;border-radius:5px;"></div>
<span class="t" style="left:755.71px;top:724.90px;font-size:21.2px;line-height:23px;color:#1a1a1a;transform:scaleX(0.9600);">-</span>
<div style="left:805.70px;top:716.60px;width:47.20px;height:40.00px;box-sizing:border-box;background:#fdfdfd;border:1px solid #d2d2d2;border-bottom-color:#bdbdbd;border-radius:5px;"></div>
<span class="t" style="left:823.36px;top:724.90px;font-size:21.2px;line-height:23px;color:#1a1a1a;transform:scaleX(0.9600);">+</span>
<div style="left:876.00px;top:716.60px;width:47.20px;height:40.00px;box-sizing:border-box;background:#fdfdfd;border:1px solid #d2d2d2;border-bottom-color:#bdbdbd;border-radius:5px;"></div>
<span class="t" style="left:892.25px;top:724.90px;font-size:21.2px;line-height:23px;color:#1a1a1a;transform:scaleX(0.9600);">R</span>
<div style="left:1492.20px;top:717.00px;width:99.80px;height:40.00px;box-sizing:border-box;background:#fdfdfd;border:1px solid #d2d2d2;border-bottom-color:#bdbdbd;border-radius:5px;"></div>
<span class="t" style="left:1523.44px;top:725.30px;font-size:21.2px;line-height:23px;color:#1a1a1a;transform:scaleX(0.9600);">Text</span>
<div style="left:8.50px;top:790.50px;width:1054.00px;height:196.50px;border:1px solid #dcdcdc;box-sizing:border-box;"></div>
<div style="left:19.00px;top:788.50px;width:121.00px;height:5.00px;background:#f0f0f0;"></div>
<span class="t" style="left:23.69px;top:778.80px;font-size:21.2px;line-height:23px;color:#1a1a1a;transform:scaleX(1.0139);">Plot options</span>
<div style="left:26.50px;top:841.00px;width:117.80px;height:112.50px;border:1px solid #dcdcdc;box-sizing:border-box;"></div>
<div style="left:37.20px;top:839.00px;width:70.30px;height:5.00px;background:#f0f0f0;"></div>
<span class="t" style="left:41.53px;top:829.20px;font-size:21.2px;line-height:23px;color:#1a1a1a;transform:scaleX(0.9511);">Device</span>
<div style="left:163.00px;top:841.00px;width:121.50px;height:112.50px;border:1px solid #dcdcdc;box-sizing:border-box;"></div>
<div style="left:173.90px;top:839.00px;width:56.10px;height:5.00px;background:#f0f0f0;"></div>
<span class="t" style="left:178.21px;top:829.20px;font-size:21.2px;line-height:23px;color:#1a1a1a;transform:scaleX(0.9829);">Units</span>
<div style="left:294.50px;top:841.00px;width:125.50px;height:112.50px;border:1px solid #dcdcdc;box-sizing:border-box;"></div>
<div style="left:305.20px;top:839.00px;width:52.80px;height:5.00px;background:#f0f0f0;"></div>
<span class="t" style="left:309.54px;top:829.20px;font-size:21.2px;line-height:23px;color:#1a1a1a;transform:scaleX(0.9359);">Axes</span>
<svg class="a" style="left:35.50px;top:873.00px" width="24" height="24" viewBox="0 0 24 24"><circle cx="12" cy="12" r="10.7" fill="#0a5cad"/><circle cx="12" cy="12" r="4.6" fill="#fff"/></svg>
<span class="t" style="left:64.44px;top:873.40px;font-size:21.2px;line-height:23px;color:#1a1a1a;transform:scaleX(1.0830);">Mount</span>
<svg class="a" style="left:35.50px;top:912.00px" width="24" height="24" viewBox="0 0 24 24"><circle cx="12" cy="12" r="10.2" fill="#f8f8f8" stroke="#c6c6c6" stroke-width="1.2"/></svg>
<span class="t" style="left:63.92px;top:912.00px;font-size:21.2px;line-height:23px;color:#a2a2a2;transform:scaleX(0.9716);">AO</span>
<svg class="a" style="left:171.80px;top:873.00px" width="24" height="24" viewBox="0 0 24 24"><circle cx="12" cy="12" r="10.7" fill="#0a5cad"/><circle cx="12" cy="12" r="4.6" fill="#fff"/></svg>
<span class="t" style="left:201.63px;top:873.40px;font-size:21.2px;line-height:23px;color:#1a1a1a;transform:scaleX(0.9544);">arc-sec</span>
<svg class="a" style="left:171.80px;top:912.00px" width="24" height="24" viewBox="0 0 24 24"><circle cx="12" cy="12" r="10.2" fill="#f4f4f4" stroke="#6e6e6e" stroke-width="1.2"/></svg>
<span class="t" style="left:201.62px;top:912.00px;font-size:21.2px;line-height:23px;color:#1a1a1a;transform:scaleX(0.9715);">pixels</span>
<svg class="a" style="left:303.60px;top:873.00px" width="24" height="24" viewBox="0 0 24 24"><circle cx="12" cy="12" r="10.7" fill="#0a5cad"/><circle cx="12" cy="12" r="4.6" fill="#fff"/></svg>
<span class="t" style="left:333.33px;top:873.40px;font-size:21.2px;line-height:23px;color:#1a1a1a;transform:scaleX(0.9547);">RA/Dec</span>
<svg class="a" style="left:303.60px;top:912.00px" width="24" height="24" viewBox="0 0 24 24"><circle cx="12" cy="12" r="10.2" fill="#f4f4f4" stroke="#6e6e6e" stroke-width="1.2"/></svg>
<span class="t" style="left:333.26px;top:912.00px;font-size:21.2px;line-height:23px;color:#1a1a1a;transform:scaleX(1.0554);">dx/dy</span>
<svg class="a" style="left:429.30px;top:863.20px" width="23" height="23" viewBox="0 0 23 23"><rect x="0" y="0" width="22.6" height="22.6" rx="4.5" fill="#0a5cad"/><path d="M5.6 12.1 L9.4 15.8 L17 8" fill="none" stroke="#fff" stroke-width="1.7" stroke-linecap="round" stroke-linejoin="round"/></svg>
<span class="t" style="left:457.51px;top:862.60px;font-size:21.2px;line-height:23px;color:#1a1a1a;transform:scaleX(0.9851);">Corrections</span>
<svg class="a" style="left:429.30px;top:906.90px" width="23" height="23" viewBox="0 0 23 23"><rect x="0" y="0" width="22.6" height="22.6" rx="4.5" fill="#0a5cad"/><path d="M5.6 12.1 L9.4 15.8 L17 8" fill="none" stroke="#fff" stroke-width="1.7" stroke-linecap="round" stroke-linejoin="round"/></svg>
<span class="t" style="left:457.53px;top:906.30px;font-size:21.2px;line-height:23px;color:#1a1a1a;transform:scaleX(0.9521);">Grid</span>
<svg class="a" style="left:592.50px;top:863.20px" width="23" height="23" viewBox="0 0 23 23"><rect x="0" y="0" width="22.6" height="22.6" rx="4.5" fill="#0a5cad"/><path d="M5.6 12.1 L9.4 15.8 L17 8" fill="none" stroke="#fff" stroke-width="1.7" stroke-linecap="round" stroke-linejoin="round"/></svg>
<span class="t" style="left:620.78px;top:862.60px;font-size:21.2px;line-height:23px;color:#1a1a1a;transform:scaleX(0.8841);">RA</span>
<svg class="a" style="left:592.50px;top:906.90px" width="23" height="23" viewBox="0 0 23 23"><rect x="0" y="0" width="22.6" height="22.6" rx="4.5" fill="#0a5cad"/><path d="M5.6 12.1 L9.4 15.8 L17 8" fill="none" stroke="#fff" stroke-width="1.7" stroke-linecap="round" stroke-linejoin="round"/></svg>
<span class="t" style="left:620.75px;top:906.30px;font-size:21.2px;line-height:23px;color:#1a1a1a;transform:scaleX(0.9256);">Dec</span>
<svg class="a" style="left:683.60px;top:863.20px" width="23" height="23" viewBox="0 0 23 23"><rect x="0.7" y="0.7" width="21" height="21" rx="4" fill="#f6f6f6" stroke="#6e6e6e" stroke-width="1.3"/></svg>
<span class="t" style="left:711.96px;top:862.60px;font-size:21.2px;line-height:23px;color:#1a1a1a;transform:scaleX(0.9147);">Star mass</span>
<svg class="a" style="left:683.60px;top:906.90px" width="23" height="23" viewBox="0 0 23 23"><rect x="0.7" y="0.7" width="21" height="21" rx="4" fill="#f6f6f6" stroke="#6e6e6e" stroke-width="1.3"/></svg>
<span class="t" style="left:712.00px;top:906.30px;font-size:21.2px;line-height:23px;color:#1a1a1a;transform:scaleX(0.8625);">SNR</span>
<svg class="a" style="left:827.60px;top:863.20px" width="23" height="23" viewBox="0 0 23 23"><rect x="0" y="0" width="22.6" height="22.6" rx="4.5" fill="#0a5cad"/><path d="M5.6 12.1 L9.4 15.8 L17 8" fill="none" stroke="#fff" stroke-width="1.7" stroke-linecap="round" stroke-linejoin="round"/></svg>
<span class="t" style="left:856.56px;top:862.60px;font-size:21.2px;line-height:23px;color:#1a1a1a;transform:scaleX(0.9115);">Events</span>
<svg class="a" style="left:827.60px;top:906.90px" width="23" height="23" viewBox="0 0 23 23"><rect x="0.7" y="0.7" width="21" height="21" rx="4" fill="#f6f6f6" stroke="#6e6e6e" stroke-width="1.3"/></svg>
<span class="t" style="left:856.50px;top:906.30px;font-size:21.2px;line-height:23px;color:#1a1a1a;">Limits</span>
<svg class="a" style="left:943.70px;top:884.40px" width="23" height="23" viewBox="0 0 23 23"><rect x="0.7" y="0.7" width="21" height="21" rx="4" fill="#f6f6f6" stroke="#6e6e6e" stroke-width="1.3"/></svg>
<span class="t" style="left:971.94px;top:883.80px;font-size:21.2px;line-height:23px;color:#1a1a1a;transform:scaleX(0.9397);">Scatter</span>
<div style="left:1082.00px;top:817.00px;width:580.00px;height:169.50px;box-sizing:border-box;background:#f9f9f9;border:1px solid #ececec;"></div>
<div style="left:1082.00px;top:779.30px;width:106.50px;height:39.20px;box-sizing:border-box;background:#f9f9f9;border:1px solid #e4e4e4;border-bottom:none;border-radius:3px 3px 0 0;"></div>
<div style="left:1188.50px;top:781.50px;width:77.00px;height:35.00px;box-sizing:border-box;background:#f3f3f3;border:1px solid #e6e6e6;border-left:none;border-bottom:none;border-radius:0 3px 0 0;"></div>
<span class="t" style="left:1094.63px;top:784.20px;font-size:21.2px;line-height:23px;color:#1a1a1a;transform:scaleX(0.9530);">Statistics</span>
<span class="t" style="left:1196.48px;top:787.80px;font-size:21.2px;line-height:23px;color:#1a1a1a;transform:scaleX(1.0304);">Drift</span>
<div style="left:1236.00px;top:861.80px;width:318.90px;height:111.80px;background:#c0c0c0;"></div>
<div style="left:1097.00px;top:828.60px;width:456.70px;height:33.20px;background:linear-gradient(#fdfdfd,#f0f0f0);"></div>
<div style="left:1097.00px;top:861.80px;width:139.00px;height:111.00px;background:linear-gradient(90deg,#f6f6f6,#efefef);"></div>
<svg class="a" style="left:1090px;top:820px" width="480" height="160" viewBox="1090 820 480 160" fill="none" stroke="#8c8c8c" stroke-width="1.4">
<path d="M1097.0 828.6H1553.7 M1097.0 861.8H1553.7"/>
<path d="M1097.0 899.0H1236.0"/>
<path d="M1097.0 935.6H1236.0"/>
<path d="M1097.0 972.8H1236.0"/>
<path d="M1097.0 828.6V972.8 M1236.0 828.6V972.8"/>
<path d="M1388.3 828.6V861.8 M1553.7 828.6V861.8"/>
<path stroke="#b6b6b6" stroke-width="1" d="M1236.0 899.0H1553.7 M1236.0 935.6H1553.7 M1388.3 861.8V972.8"/>
</svg>
<span class="t" style="left:1288.44px;top:833.20px;font-size:21.2px;line-height:23px;color:#111;font-weight:700;">RMS</span>
<span class="t" style="left:1446.24px;top:833.20px;font-size:21.2px;line-height:23px;color:#111;font-weight:700;">Peak</span>
<span class="t" style="left:1151.19px;top:869.40px;font-size:21.2px;line-height:23px;color:#111;font-weight:700;">RA</span>
<span class="t" style="left:1147.05px;top:906.00px;font-size:21.2px;line-height:23px;color:#111;font-weight:700;">Dec</span>
<span class="t" style="left:1141.97px;top:942.80px;font-size:21.2px;line-height:23px;color:#111;font-weight:700;">Total</span>
<span class="t" style="left:1244.54px;top:867.20px;font-size:21.2px;line-height:23px;color:#222;transform:scaleX(0.9449);">0.48&quot; (1.08 px)</span>
<span class="t" style="left:1244.54px;top:904.30px;font-size:21.2px;line-height:23px;color:#222;transform:scaleX(0.9449);">0.42&quot; (0.96 px)</span>
<span class="t" style="left:1244.54px;top:941.60px;font-size:21.2px;line-height:23px;color:#222;transform:scaleX(0.9449);">0.64&quot; (1.45 px)</span>
<span class="t" style="left:1393.92px;top:867.20px;font-size:21.2px;line-height:23px;color:#222;transform:scaleX(0.9726);">-2.11&quot; (-4.80 px)</span>
<span class="t" style="left:1399.85px;top:904.30px;font-size:21.2px;line-height:23px;color:#222;transform:scaleX(0.9249);">1.67&quot; ( 3.80 px)</span>
<div style="left:1.00px;top:998.30px;width:1670.00px;height:1.40px;background:#dcdcdc;"></div>
<div style="left:0.00px;top:1026.00px;width:1.30px;height:6.00px;background:#222;border-radius:0 3px 0 0;"></div>
<svg class="a" style="left:1655px;top:1016px" width="16" height="16" viewBox="0 0 16 16" fill="#d2d2d2"><rect x="11" y="3" width="2.4" height="2.4"/><rect x="6.5" y="7.5" width="2.4" height="2.4"/><rect x="11" y="7.5" width="2.4" height="2.4"/><rect x="2" y="12" width="2.4" height="2.4"/><rect x="6.5" y="12" width="2.4" height="2.4"/><rect x="11" y="12" width="2.4" height="2.4"/></svg>
</div>
</body></html>
